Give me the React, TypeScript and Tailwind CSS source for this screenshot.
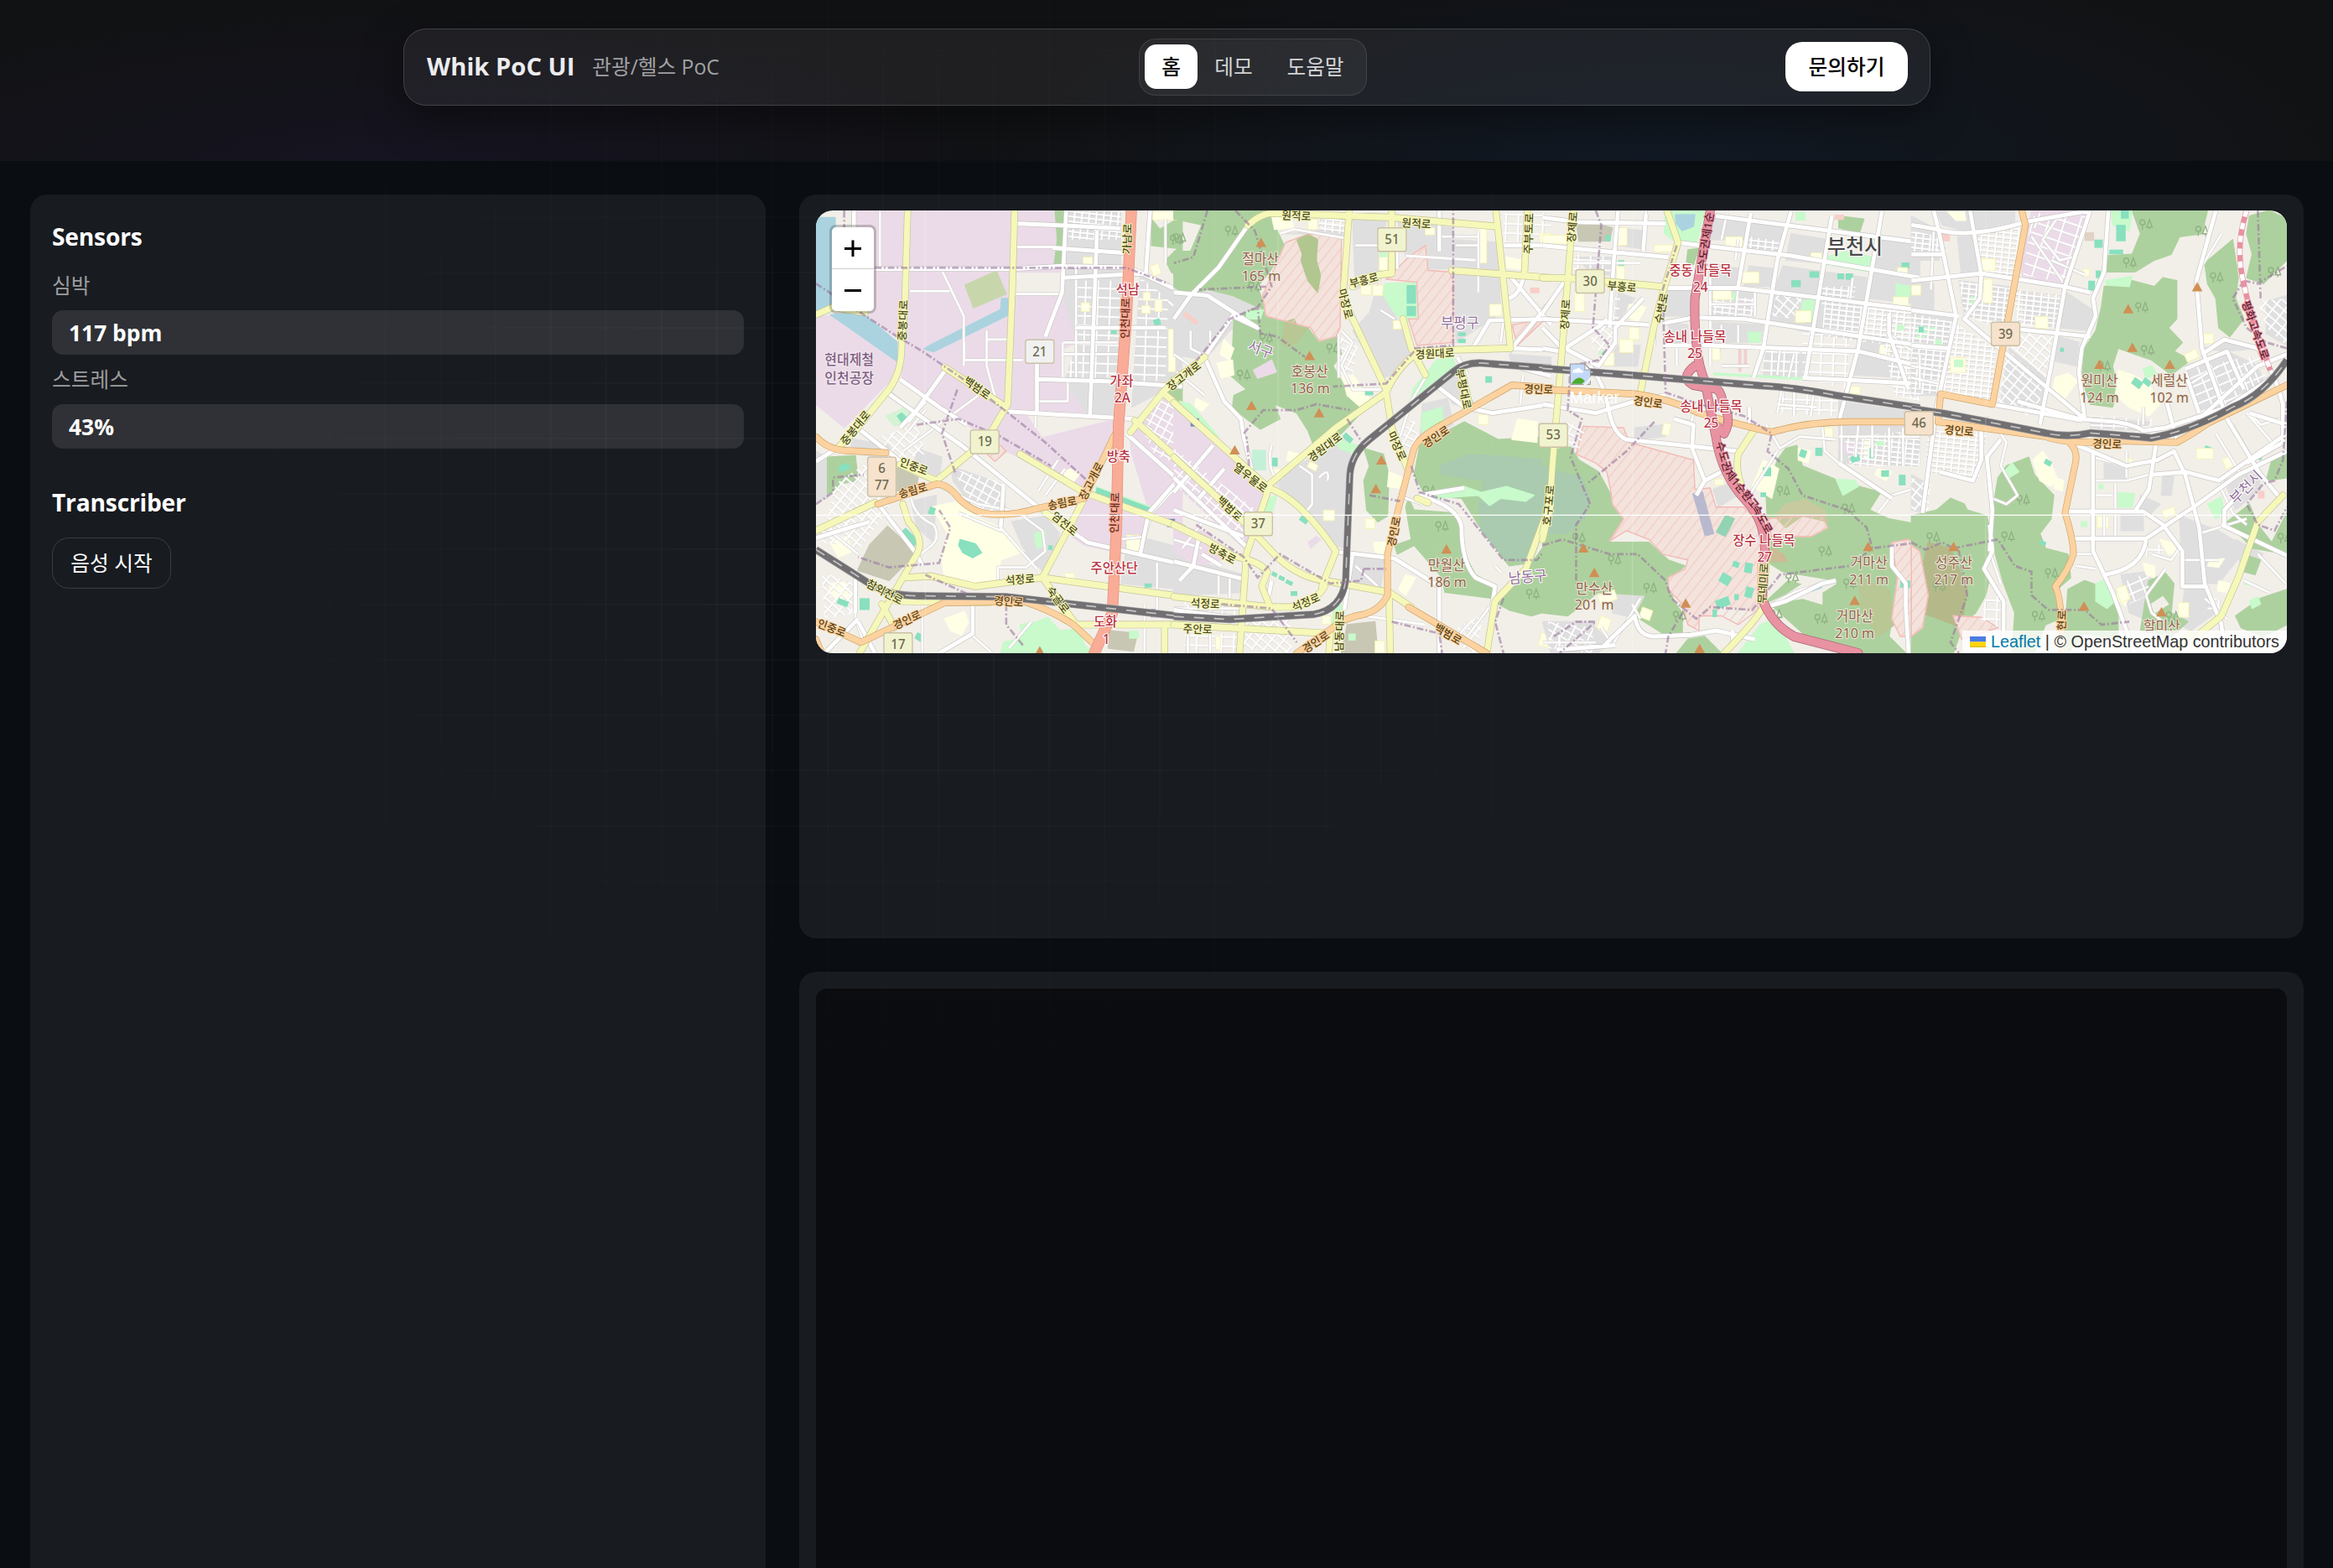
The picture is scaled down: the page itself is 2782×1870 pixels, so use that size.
import React from "react";

type RoadKind = "m" | "w" | "y" | "o" | "t" | "h";
type Label = [x: number, y: number, text: string, kind: string, rotate?: number];
type Sheet = {
  x: number;
  land: [fill: string, points: string][];
  streets: [pattern: string, points: string][];
  roads: [RoadKind, string][];
  rail: string;
  borders: string;
  blocks: [fill: string, x: number, y: number, w: number, h: number, rotate?: number][];
  peaks: [number, number][];
  trees: [number, number][];
  shields: [number, number, string, string][];
  labels: Label[];
};

const ROAD: Record<RoadKind, [fill: string, casing: string, width: number]> = {
  m: ["#ffffff", "#d4d1ce", 8],
  w: ["#ffffff", "#c9c6c4", 14],
  y: ["#f6f8b9", "#c3c494", 21],
  o: ["#fcd3a0", "#cfa468", 20],
  t: ["#f9ac98", "#e58f78", 36],
  h: ["#e892a2", "#a5606f", 29],
};

const F = "#add19e";
const P = "#ebdbe8";
const G = "#e0dfdf";
const W = "#aad3df";
const S = "#ffffe5";
const B = "#f3e3dc";
const L = "#c8facc";
const K = "#88e0be";
const C = "#aacbaf";
const N = "#c7c7b4";

const LABEL: Record<string, [fill: string, size: number, halo: string]> = {
  y: ["#4e4b25", 38, "#f6f8b9"],
  o: ["#5b4316", 38, "#fcd3a0"],
  t: ["#6b2c20", 38, "#f9ac98"],
  h: ["#5d1f30", 38, "#e892a2"],
  s: ["#b8323f", 46, "#ffffff"],
  p: ["#8f6248", 48, "#eeeadd"],
  d: ["#94709b", 50, "#ffffff"],
  i: ["#7d6080", 48, "#f3e8f1"],
  c: ["#4a4a4a", 72, "#ffffff"],
};

const sheets: Sheet[] = [
  {
    x: 0,
    land: [
      [P, "175,31 920,31 925,300 960,370 975,480 925,500 920,610 1020,620 1030,720 1110,740 1060,890 1000,1000 960,960 720,850 640,800 480,690 345,600 350,480 250,410 160,380"],
      [P, "39,390 100,390 330,545 325,590 140,770 39,690"],
      [P, "1010,990 1240,1055 1200,1210 1000,1170 955,1140"],
      [P, "1160,790 1280,650 1350,700 1350,1110 1230,1050 1170,860"],
      ["#f2efe9", "755,245 920,245 910,320 750,315"],
      ["#f2efe9", "800,730 1020,730 1000,700 1100,740 850,800"],
      [W, "39,55 108,55 108,370 39,375"],
      [W, "90,385 205,380 330,478 330,545"],
      [W, "425,502 460,512 725,388 725,330 703,330 700,368 450,488"],
      [G, "930,31 1130,31 1130,740 1020,740 930,610 975,480 930,350"],
      [G, "1200,250 1350,320 1350,590 1270,650 1170,700"],
      [G, "170,808 300,830 330,890 160,850"],
      [G, "400,840 490,870 480,940 390,900"],
      [G, "740,1090 860,1070 910,1130 870,1275 790,1200"],
      [G, "380,1020 470,1000 460,1160 400,1110"],
      [G, "520,900 700,960 720,1050 600,1040 530,950"],
      [G, "39,850 80,870 80,1010 39,1020"],
      [G, "1160,1130 1350,1180 1350,1320 1130,1300"],
      [F, "1240,60 1270,95 1350,50 1350,270 1310,240 1290,200 1335,160 1240,150"],
      [F, "80,870 180,865 190,950 130,960 80,1000"],
      [F, "895,31 925,31 915,215 892,215 903,130"],
      [F, "1310,600 1350,600 1350,690 1290,640"],
      [L, "820,1130 860,1120 860,1170 830,1180"],
      [L, "700,1537 710,1500 775,1485 770,1440 830,1430 870,1415 910,1460 985,1455 1000,1510 1040,1537"],
      [L, "1040,970 1240,1040 1240,1062 1040,1000"],
      ["#c8d7ab", "572,285 685,237 720,315 603,362"],
      [N, "295,1105 400,1195 300,1290 188,1255 230,1170"],
      [N, "330,905 405,940 400,965 330,985"],
      [N, "1090,1460 1190,1470 1175,1530 1085,1520"],
      [S, "455,1040 550,1020 610,1075 700,1110 740,1150 785,1190 700,1220 690,1285 590,1310 500,1290 490,1220 510,1130"],
      [S, "90,1300 140,1295 165,1340 120,1360 88,1340"],
      [S, "500,1420 570,1395 585,1430 560,1475 520,1460"],
      [S, "90,1160 150,1140 170,1190 120,1210"],
      [S, "925,920 950,910 980,930 960,955 930,945"],
      ["#d4f3d4", "290,730 360,700 390,740 320,765"],
      [B, "640,850 700,830 720,850 680,885"],
      [K, "345,1125 360,1113 400,1150 390,1176 375,1172"],
      [K, "555,1150 610,1165 632,1195 600,1212 565,1195 550,1170"],
      [K, "1045,975 1238,1045 1230,1060 1040,1000"],
      [K, "330,730 345,720 370,740 350,758"],
    ],
    streets: [
      ["url(#grid-a)", "935,35 1130,35 1130,130 945,130"],
      ["url(#grid-b)", "975,270 1130,270 1120,600 930,600 975,480"],
      ["url(#grid-b)", "1200,260 1300,330 1290,600 1170,640"],
      ["url(#grid-c)", "110,960 220,890 300,1040 200,1180 60,1160"],
      ["url(#grid-d)", "530,910 720,960 710,1060 600,1040"],
      ["url(#grid-d)", "1190,740 1290,660 1350,710 1350,900 1250,860"],
      ["url(#grid-c)", "60,1260 170,1300 180,1400 70,1420"],
      ["url(#grid-c)", "270,800 400,760 430,860 300,880"],
    ],
    roads: [
      ["m", "M268,31V230M172,31V80M375,305H518M490,235L568,390V560M370,300V230M650,440V560L690,700M570,480V540H780M650,470H725M830,680H940V615M825,560V770M925,480H1120M920,520H1120M922,480V600M750,315H910M750,155H890"],
      ["m", "M290,640L370,700M505,570L350,760M620,660L350,850M430,710L370,780M835,985L905,880M860,1000L930,910M380,1010Q390,1070 460,1100Q490,1150 440,1180L400,1210M690,1290V1245H790L860,1190L850,1120L780,1070M40,1120L100,1130L190,1200M180,1320V1420L210,1500M420,1380V1537M730,1520L810,1430M1200,1200L1240,1060L1350,950M1215,1370V1537M1260,1230V1400"],
      ["m", "M550,1060L700,1120V1060M700,1110L830,1250M590,1470L670,1537M460,960L620,1030L730,1050M970,220V600M1120,1150L1220,1140M1290,60V210M1300,340L1350,380"],
      ["w", "M175,31V100M250,230H740M740,230L920,220L1160,225L1350,310M750,75L925,82L1130,92M885,158L1140,175M935,31L920,310L860,460M830,550V720M1045,100L1020,725M725,715L1175,740L1240,780M920,260L1220,245L1235,31M835,605L1080,612L1350,630M970,430H1290"],
      ["w", "M340,605L480,700L580,760M200,780L390,920M300,655L560,830L730,960L860,1060L1010,1160L1350,1235M430,680L340,770M505,570L370,750M39,1145L230,1090M39,885L130,830M270,1040L400,1200L420,1240M710,970L700,1110M600,1370V1470L480,1537M190,1420L70,1537M190,1430L250,1537M1150,790L1350,960M1200,1200L1230,1060L1350,930M180,1250V1400"],
      ["y", "M367,31L358,330L345,500Q345,580 300,640L180,780L120,835M750,31L742,300L725,690L650,810L470,950M500,565L720,700M39,1120L250,1025M39,385L100,360L215,378M340,895L470,950M770,860L1000,990L1350,1110M1000,1010L850,1280M195,1537L350,1280L450,1275L610,1310L850,1280L1350,1345M350,1030L370,1090Q430,1150 400,1200L350,1280M275,1370L320,1450M330,1360L660,1365M850,1280L970,1440L1350,1440M1287,1440V1537M1165,785L1285,645L1350,590M1180,745L1350,890M1280,650L1350,705M860,1060L960,1120"],
      ["o", "M39,800Q80,845 150,848L290,855M260,1030L470,962Q510,960 550,1010Q610,1070 700,1065Q760,1065 830,1045L1000,1010L1110,790M39,1430L200,1500L500,1365L780,1360Q880,1390 960,1440L1040,1510M39,1490L60,1537"],
      ["t", "M1168,31L1150,400L1122,760L1115,1100L1100,1400L1035,1537"],
    ],
    rail: "M39,1185L230,1300Q290,1340 400,1342L720,1345L1350,1412",
    borders: "M140,31V90M39,280L330,460L420,510L620,640L860,820L1010,950M250,226H1150L1300,280M39,1030L100,990L100,940L210,930M400,760L550,740L700,800L880,900M480,1050L520,1110L480,1230L300,1245L190,1210M430,1270L580,1335M720,1370V1440L780,1510M545,640L490,790L540,930",
    blocks: [
      ["#7a85b5", 1143, 186, 30, 30], ["#7a85b5", 1128, 512, 30, 30], ["#7a85b5", 1296, 1080, 28, 28], ["#7a85b5", 1237, 1387, 28, 28],
      [S, 995, 190, 34, 24], [S, 988, 345, 30, 30], [S, 1210, 310, 26, 28], [S, 1252, 335, 26, 40], [S, 1205, 355, 30, 26], [S, 1300, 435, 26, 145],
      [K, 1248, 400, 24, 22, -20], [K, 1095, 435, 20, 16], [K, 120, 895, 40, 22, -20], [K, 443, 1040, 22, 26, 20], [K, 1148, 1165, 24, 22], [K, 115, 1355, 40, 20, 20], [K, 195, 1350, 36, 40], [K, 395, 1470, 26, 24, 30], [K, 1215, 1300, 26, 14], [K, 870, 1170, 16, 16],
      [S, 1150, 1135, 50, 55], [S, 930, 1265, 34, 24], [L, 1160, 1460, 34, 28], [S, 1240, 215, 30, 36, -20], [S, 1245, 31, 100, 32],
    ],
    peaks: [[840, 1530]],
    trees: [[1330, 130]],
    shields: [[840, 511, "21", "#f1f1f1"], [643, 818, "19", "#f1f3cf"], [333, 1508, "17", "#f1f3cf"], [275, 937, "6|77", "#f6e2cd"]],
    labels: [
      [158, 556, "현대제철", "i"], [158, 620, "인천공장", "i"],
      [357, 405, "중봉대로", "y", -87], [185, 775, "중봉대로", "y", -50], [612, 640, "백범로", "y", 35],
      [387, 908, "인중로", "y", 20], [388, 990, "송림로", "o", -15], [922, 1033, "송림로", "o", -10], [1030, 955, "장고개로", "o", -62],
      [1160, 128, "가남로", "y", -88], [1153, 398, "인천대로", "t", -88], [1115, 1060, "인천대로", "t", -88],
      [925, 1102, "염전로", "y", 38], [770, 1293, "석정로", "y", -4], [282, 1335, "참외전로", "y", 27], [900, 1360, "숙골로", "y", 52],
      [728, 1368, "경인로", "o", 4], [368, 1430, "경인로", "o", -24], [93, 1458, "인중로", "o", 20],
      [1155, 315, "석남", "s"], [1133, 628, "가좌", "s"], [1136, 685, "2A", "s"], [1122, 885, "방축", "s"], [1107, 1263, "주안산단", "s"], [1075, 1447, "도화", "s"], [1078, 1505, "1", "s"],
    ],
  },
  {
    x: 1320,
    land: [
      [G, "0,290 210,320 310,370 200,440 110,540 0,520"], [G, "640,60 760,60 740,270 650,300"], [G, "800,60 1000,90 1000,230 910,230 900,150 830,190"],
      [G, "1000,130 1160,140 1170,380 1010,480"], [G, "730,280 800,400 860,490 790,590 740,600 640,440 700,380"], [G, "350,950 620,800 640,900 620,1180 560,1170 450,1030"],
      [G, "640,1190 760,1210 740,1310 630,1290"], [G, "0,1200 250,1270 250,1330 0,1340"], [G, "890,690 980,670 1000,760 880,820"], [G, "1200,520 1350,530 1350,560 1210,560"],
      [G, "400,110 600,90 610,120 480,110"], [G, "1000,550 1080,700 1000,690 950,620"],
      [P, "0,690 120,800 340,975 310,1060 250,1180 0,960"], [P, "0,1100 130,1130 170,1220 80,1240 0,1190"], [P, "480,1160 510,1140 525,1150 490,1180"],
      [F, "100,31 350,31 370,100 395,150 350,230 300,290 330,372 210,320 120,300 50,320 0,290 0,170 60,170 100,80 0,60 0,31"],
      [F, "215,400 280,365 420,400 480,430 520,480 585,460 600,520 570,560 600,610 620,650 675,690 660,730 600,790 500,830 480,780 440,720 360,690 380,740 310,775 260,740 210,700 215,660 260,640 200,590 210,500"],
      [F, "880,830 960,790 1040,750 1100,780 1160,810 1350,800 1350,1000 1280,1230 1200,1240 1090,1100 1030,1010 900,1000 860,930"],
      [F, "1170,1330 1280,1230 1350,1140 1350,1390 1280,1410 1200,1390 1160,1370"],
      [F, "680,840 750,860 770,930 765,1070 730,1090 690,1050 680,950 700,900"],
      [F, "840,1010 860,1050 1000,1060 1025,1100 1040,1200 1080,1270 1150,1310 1140,1350 970,1330 960,1280 860,1170 800,1200 790,1170 850,1150 830,1040"],
      [C, "950,900 1060,860 1350,880 1350,970 1330,1100 1280,1230 1190,1220 1100,1120 1090,1040 1110,950 960,930"],
      [L, "930,1000 1040,970 1100,990 1190,970 1290,1000 1260,1020 1170,1010 1130,1035 1090,1000 940,1010"],
      [L, "855,640 940,540 1000,530 1010,570 850,670"], [L, "890,720 960,700 965,760 900,810 885,770"], [L, "755,280 880,275 875,410 830,410 790,380 750,320"],
      [L, "580,1350 600,1370 600,1450 560,1460"], [L, "340,1010 370,1000 350,1060 325,1060"], [L, "260,375 320,370 310,400 260,400"], [L, "580,810 660,830 640,855 590,840"], [L, "20,680 60,690 160,800 110,780"],
      [B, "400,140 470,115 520,108 600,125 595,430 580,460 520,475 490,430 410,410 330,390 318,320"],
      [B, "760,265 840,190 900,150 910,235 985,240 1000,270 1000,480 870,490 840,400 875,400 870,275"],
      [B, "1210,420 1330,400 1230,490"], ["#b2c690", "440,130 480,112 515,130 510,200 525,250 515,310 480,270 455,200 460,180"], ["#b9c795", "400,410 430,400 445,430 480,430 440,480 410,495 385,480"],
      [P, "285,575 350,540 367,580 300,602"], [N, "620,1440 720,1430 730,1537 600,1537"],
      [S, "350,50 420,60 430,90 360,95"], [S, "180,470 215,500 200,540 165,520"], [S, "600,580 650,600 680,650 720,690 680,710 620,660"],
      [S, "155,550 210,540 215,590 170,600"], [S, "770,920 820,940 810,975 765,970"], [S, "1230,740 1300,750 1300,820 1210,810"], [S, "80,670 125,690 100,715 75,695"],
      [S, "830,1270 865,1280 830,1340 805,1320"], [S, "715,1160 765,1160 750,1210 720,1190"], [S, "1190,190 1245,200 1240,230 1190,225"], [S, "410,850 450,860 440,890 405,880"],
    ],
    streets: [
      ["url(#grid-c)", "0,840 310,1060 240,1170 0,960"], ["url(#grid-a)", "520,40 620,50 610,110 520,100"], ["url(#grid-b)", "40,1360 240,1370 240,1410 40,1400"],
      ["url(#grid-b)", "40,1470 240,1470 230,1537 40,1537"], ["url(#grid-d)", "590,460 660,470 640,600 590,590"], ["url(#grid-c)", "1000,1460 1110,1400 1080,1537 990,1500"],
      ["url(#grid-d)", "800,770 860,740 880,820 830,850"], ["url(#grid-b)", "1180,40 1350,40 1350,150 1180,140"], ["url(#grid-c)", "250,1420 420,1400 420,1537 250,1520"],
    ],
    roads: [
      ["m", "M60,440V500L120,530M10,580L110,660M0,520L60,560M130,440V520M380,110L430,95L610,125M530,40L620,60M600,440L640,480L600,560L640,640L740,640M650,150H800V230M830,185L1080,200M1010,150H1090M1090,100V310M950,120H1090M590,600V450M740,370L790,400M810,800L850,680L900,600M450,900L495,930V1030L470,1060M350,830Q330,900 370,950M520,940Q560,900 550,950M800,1000L890,1030M1250,590L1240,690M1150,1240L1170,1260M680,1410L900,1440"],
      ["m", "M30,1180L120,1070M0,1150L100,1180M160,1270V1340M200,1270V1350M730,1310L650,1240M1060,1430L1000,1500M1130,1380L1050,1480M1180,400L1170,480M50,1370V1537M0,1385H240M130,1400V1537"],
      ["w", "M0,310L120,320L300,430L210,390L110,530L180,680L240,740L250,800L290,960M0,400L60,320L160,225L265,82M930,620L1040,700L1140,720L1350,690M1015,530L1050,590M950,170V31M1180,150H1350M1200,250L1350,420M1070,500L1130,405L1350,400M1200,510L1350,340M1210,500L1350,505M1200,330Q1260,310 1255,180M0,940L260,1175M0,990L140,830M90,1010L180,910M0,1050L250,1140M20,1290L70,1240L90,1140M0,1225L250,1285M590,1193L790,1215L950,1310V1537M890,1005Q1020,1040 1030,1110Q1030,1230 1080,1280L1150,1310L1135,1400M640,1200L610,1390M170,1240L100,1200M880,1000L1040,975M350,1290L340,1340M0,1390L240,1420M1200,555L1350,595"],
      ["y", "M265,82Q310,40 360,40L780,55L1150,85M628,31L610,270Q600,320 640,400L760,640M640,290Q660,255 780,245V31M1153,31L1205,500L1010,505L880,510Q800,560 760,650L580,770L345,960L310,1060L260,1200L235,1537M820,400L850,500L900,590M1265,31L1255,250M995,235L1350,260M760,650L780,770L840,920M0,685L340,975Q450,1010 580,1190L530,1310M0,870L250,1090L370,1210Q450,1280 540,1290L770,1330L850,1380M0,1100L120,1155L210,1205Q310,1225 335,1260L315,1310L345,1380H420Q500,1370 540,1310M0,1345L345,1380M0,1440L560,1470L555,1537M770,1330L775,1537M1030,570L1060,700M1350,870L1330,1070L1260,1250L1150,1360L1120,1537M110,530L0,610M870,1010L910,1025"],
      ["o", "M1350,635L1210,625L960,760Q880,800 860,840L800,1060L765,1200V1340Q740,1390 680,1405Q610,1415 570,1450L440,1537M840,1380L1120,1537"],
    ],
    rail: "M0,1412L200,1422L500,1405Q600,1390 615,1290L630,930Q635,860 700,810L1000,580Q1040,548 1100,550L1350,568",
    borders: "M120,31L70,190L0,210M220,31L290,100L350,290L300,360L310,450L370,460L470,530M330,290L90,300M300,360L200,400L0,640M250,790L320,710L440,710L510,690L630,710M860,500L1000,490V31M860,510L760,620L570,630M620,740L680,830M850,900L880,990L1020,1030L1180,1220H1300L1350,1160M680,1250L670,1290L560,1300L380,1200L300,1280L250,1210L80,1100M680,1250H760M700,1000L810,1020M170,1370L350,1385L440,1500M780,1430L950,1470L960,1537M1180,1350L1150,1430L1180,1537M270,900L260,800M700,1250",
    blocks: [
      ["#7a85b5", 60, 738, 30, 28], [K, 833, 285, 34, 28], [K, 833, 312, 34, 36], [K, 833, 356, 34, 34], [K, 1017, 446, 28, 12], [K, 1017, 468, 28, 14], [K, 1115, 595, 24, 22], [K, 605, 795, 36, 20, 40], [K, 684, 646, 30, 14], [K, 450, 1075, 30, 18, 35], [K, 540, 1065, 26, 16], [K, 418, 1326, 24, 16], [K, 350, 1262, 20, 14, 25], [K, 375, 1275, 22, 14, 25], [K, 400, 1290, 26, 14, 25], [K, 352, 872, 20, 30],
      [S, 670, 285, 36, 32], [S, 712, 285, 36, 36], [S, 735, 175, 30, 60], [S, 1090, 90, 30, 120], [S, 1130, 350, 44, 40], [S, 900, 90, 34, 24], [S, 785, 405, 30, 30], [S, 535, 1050, 40, 36], [S, 685, 1080, 34, 34], [S, 350, 910, 40, 34], [S, 480, 60, 34, 36], [S, 480, 890, 34, 22, 25], [S, 1090, 725, 36, 34], [S, 720, 1495, 34, 42], [S, 1310, 110, 40, 34], [S, 150, 1480, 16, 44], [S, 530, 1410, 32, 28], [S, 1310, 1470, 34, 44, 15], [L, 625, 1470, 26, 24], [L, 736, 172, 28, 18], ["#c5f0d8", 280, 845, 50, 70], ["#f7cfc8", 1275, 293, 34, 20], ["#f7cfc8", 30, 390, 60, 16, 35],
    ],
    peaks: [[312, 140], [486, 525], [278, 695], [520, 720], [218, 846], [743, 880], [723, 978], [976, 1183]],
    trees: [[207, 100], [290, 290], [330, 465], [250, 590], [570, 500], [915, 985], [960, 1105], [1285, 1335], [20, 125]],
    shields: [[781, 130, "51", "#f1f3cf"], [302, 1097, "37", "#f1f3cf"]],
    labels: [
      [438, 56, "원적로", "y", 2], [868, 82, "원적로", "y", 3], [682, 275, "부흥로", "y", -14], [608, 350, "마장로", "y", 75], [1277, 110, "주부토로", "y", -88],
      [935, 525, "경원대로", "y", -3], [545, 842, "경원대로", "y", -36], [40, 600, "장고개로", "y", -36], [270, 945, "열우물로", "y", 37], [195, 1050, "백범로", "y", 42],
      [170, 1205, "방축로", "y", 28], [112, 1375, "석정로", "y", 3], [475, 1370, "석정로", "y", -22], [85, 1462, "주안로", "y", 2], [600, 1462, "남동대로", "y", -88],
      [793, 835, "마장로", "y", 65], [1030, 640, "부평대로", "y", 78],
      [942, 807, "경인로", "o", -33], [1305, 646, "경인로", "o", 2], [795, 1125, "경인로", "o", -78], [512, 1505, "경인로", "o", -32], [978, 1478, "백범로", "o", 30],
      [310, 215, "절마산", "p"], [313, 272, "165 m", "p"], [486, 597, "호봉산", "p"], [488, 654, "136 m", "p"], [976, 1255, "만월산", "p"], [978, 1312, "186 m", "p"],
      [1024, 430, "부평구", "d"], [305, 520, "서구", "d", 20], [1268, 1295, "남동구", "d", -5],
    ],
  },
  {
    x: 2640,
    land: [
      [G, "600,40 730,60 720,130 600,130"], [G, "740,70 870,90 850,180 730,160"], [G, "890,110 1020,130 1000,210 870,200"], [G, "1190,120 1350,140 1350,350 1170,330"],
      [G, "600,210 710,230 690,290 600,290"], [G, "740,220 840,230 830,290 720,290"], [G, "860,220 1160,260 1130,470 920,440 800,400 830,300"], [G, "605,300 760,310 760,390 600,390"],
      [G, "610,410 790,420 780,480 610,480"], [G, "440,300 530,300 530,390 430,390"], [G, "270,310 330,330 260,420"], [G, "270,490 350,490 340,560 220,560"],
      [G, "450,410 520,420 520,480 450,480"], [G, "800,500 940,520 930,600 790,590"], [G, "610,980 690,950 700,1000 630,1040"], [G, "0,1430 170,1430 230,1490 200,1537 30,1537"],
      [G, "330,770 430,760 440,800 330,810"], [G, "1120,500 1180,460 1240,490 1300,600 1110,590"], [G, "120,190 250,190 240,250 180,250"], [G, "270,90 360,100 350,160 270,150"], [G, "1060,680 1350,720 1350,900 1060,890"], [G, "260,1320 400,1320 390,1430 250,1400"],
      [F, "0,850 100,835 130,880 200,920 240,990 300,1080 240,1160 380,1160 450,1220 510,1240 450,1290 470,1360 500,1400 500,1470 430,1470 330,1410 370,1340 200,1330 90,1410 0,1400"],
      [F, "870,840 910,830 930,900 1060,950 1210,990 1170,1050 1240,1080 1350,1100 1350,1150 1240,1170 1300,1260 1260,1370 1240,1480 1300,1537 1100,1537 980,1510 850,1400 800,1360 880,1290 950,1310 1050,1290 860,1260 810,1230 800,1000 840,880"],
      [F, "480,1537 520,1490 580,1480 640,1537"], [C, "0,900 60,920 140,940 170,1010 150,1080 90,1130 0,1130"],
      [B, "145,765 290,770 310,820 540,880 545,980 600,975 620,1040 720,1040 780,1100 800,1130 770,1230 770,1390 700,1440 640,1410 560,1410 560,1460 520,1440 500,1370 450,1320 450,1280 510,1250 520,1220 430,1200 380,1150 300,1120 240,1155 290,1080 250,1030 245,990 230,920 190,890 120,860"],
      [B, "800,1080 930,1070 1000,1070 1020,1110 960,1140 820,1140"], ["#c7ca9f", "830,1070 870,1030 940,1015 1010,1050 1020,1090 930,1070 870,1110"], ["#b9c795", "1130,1280 1240,1320 1260,1440 1200,1480 1140,1380"],
      [B, "1250,1160 1310,1150 1350,1180 1350,1480 1280,1480 1250,1420 1270,1280"], ["#cdbb95", "820,1180 860,1200 875,1225 820,1225"],
      [L, "440,31 580,31 550,150 480,140 435,110"], [L, "1050,945 1120,950 1130,970 1075,1000"], [L, "1010,190 1090,170 1180,190 1170,240 1020,215"], [L, "930,340 975,330 970,410 925,400"], [L, "735,445 780,445 780,480 738,478"], [L, "1265,280 1320,290 1310,330 1265,330"], [L, "780,1440 830,1420 900,1537 700,1537"],
      [F, "1060,50 1150,60 1130,120 1100,100 1060,90"], [F, "520,165 560,160 540,215 515,205"], [W, "475,45 545,45 540,85 500,100 478,75"],
      [N, "120,70 190,75 250,90 240,135 130,135"], ["#b8b8cf", "538,995 572,988 612,1130 582,1138"], ["#92d3b4", "655,1068 686,1080 655,1140 622,1125"],
      [S, "310,350 370,360 340,410 300,390"], [S, "790,880 845,910 820,1010 750,970"], [S, "1150,810 1185,820 1185,880 1150,870"], [S, "915,840 960,850 950,890 915,880"], [S, "1200,910 1250,920 1230,950 1190,930"], [S, "1210,490 1245,490 1240,530 1205,525"],
      [P, "1070,825 1130,820 1125,855 1065,860"], ["#f2efe9", "810,450 900,460 890,500 810,490"], ["#f2efe9", "640,1380 760,1400 700,1460 540,1460"], ["#f2efe9", "800,1370 870,1340 950,1290 1050,1300 1000,1330 1000,1370 930,1350"],
    ],
    streets: [
      ["url(#grid-a)", "740,120 850,135 850,185 730,180"], ["url(#grid-b)", "930,440 1100,460 1090,640 930,600"], ["url(#grid-a)", "1000,290 1120,290 1110,350 1000,350"],
      ["url(#grid-a)", "610,320 760,330 750,390 610,385"], ["url(#grid-c)", "840,310 930,330 900,400 820,390"], ["url(#grid-a)", "1010,340 1350,380 1350,500 1000,460"],
      ["url(#grid-a)", "1190,360 1350,370 1350,680 1260,660"], ["url(#grid-b)", "800,490 920,510 910,600 780,590"], ["url(#grid-c)", "170,430 270,420 240,520 180,500"],
      ["url(#grid-b)", "110,180 250,190 250,260 110,250"], ["url(#grid-b)", "840,640 1060,660 1050,730 840,720"], ["url(#grid-a)", "1080,800 1350,780 1350,900 1100,900"],
      ["url(#grid-d)", "90,750 150,780 130,840 90,820"], ["url(#grid-b)", "240,270 280,300 270,420 240,420"], ["url(#grid-d)", "20,1430 180,1450 180,1537 20,1520"],
    ],
    roads: [
      ["m", "M370,31L360,190M110,210H350M600,230V560M660,40L640,130M700,290L690,390M760,300V390M600,350H760M700,130L690,200M480,490V560M400,490V440M640,420V480M700,420V480M640,560H740M850,500L840,590M900,520L880,600M1110,260L1100,340M1250,380L1240,450L1350,530M800,760L850,840L920,800L1050,810M1000,760L1010,850L1060,890M1130,760L1120,870M1180,760V870M1240,770V900M1290,770V900M1060,800H1350M1070,760V890L1140,940M860,620L840,720M970,650L960,730M900,630V730M840,690L980,700"],
      ["m", "M740,1000L840,850M470,740L530,750M540,720L530,760M1200,1060L1250,1000L1320,980M250,1510L350,1350M210,1450L250,1510M320,1370L350,1420M60,1480V1537M0,1500L190,1500M820,1370L900,1330L1000,1300"],
      ["w", "M270,31L255,200L240,430M370,45L360,170M0,55L120,70M0,150L110,160L450,190M110,70L440,75M480,140L890,185L1350,260M620,50L1350,140M745,40L700,290M890,31L840,200L790,500L755,600M740,700V770M1035,50L940,600M1215,31L1130,500L1060,750M440,295H700L1010,330L1350,370M430,415L540,395L720,400L1350,490M430,490H600L1130,510L1350,560M0,400L380,420M80,500L210,420L230,400M80,500L200,560L260,480V430L360,330M0,380L80,270M0,430L70,500M0,500L60,510"],
      ["w", "M0,690L190,720L330,680L440,660M170,560Q220,620 235,700Q250,790 300,810L700,850M470,740L540,760L535,840L580,950L550,1000M580,950L640,920M1250,1010L1060,890M930,600L1350,620M1240,380V450L1310,640M210,1520L330,1410Q340,1480 400,1480L530,1475L620,1460L760,1490M260,1510L50,1525M680,1460V1510M800,1380L870,1360L1000,1300L1050,1290M1250,1170V1240L1300,1300V1380L1310,1537"],
      ["y", "M110,31L65,560L35,900Q30,1020 0,1130M0,260L110,262L430,290M445,31L485,140L430,310L400,420L350,650M755,780L700,860Q690,910 710,960M800,1230L790,1380Q760,1430 650,1537M0,1150L30,1030"],
      ["o", "M0,640L330,655Q450,670 560,720Q700,760 820,785Q950,750 1100,750H1350"],
      ["h", "M545,560Q490,600 540,625L600,635Q640,630 645,690Q680,740 650,790L630,770M600,31L545,330Q540,520 580,610L620,800Q640,930 730,1020Q800,1090 795,1200L785,1350Q820,1440 900,1480L1130,1537"],
    ],
    rail: "M0,568L330,592L780,627Q900,632 1050,660L1350,703",
    borders: "M190,31L210,80L180,430L240,490L200,540L100,560L90,710L140,740L100,870L170,1030L120,1100V1300M480,150L430,300L440,650L560,690L720,730L820,790L805,850L880,910L930,1000L1090,1050L1160,1110L1180,1180L1350,1160M0,1170L70,1150L240,1200L340,1200L440,1290L460,1350L550,1420L600,1380L750,1390L850,1270L1100,1240L1180,1180M400,750L300,850L160,960M40,1480L120,1430L190,1430L60,1537M500,1400L450,1480L440,1537",
    blocks: [
      [K, 125, 328, 20, 28], [K, 270, 200, 22, 22], [K, 668, 135, 18, 26], [K, 696, 140, 18, 26], [K, 955, 238, 34, 22], [K, 890, 268, 34, 24], [K, 1055, 245, 24, 20], [K, 1085, 245, 26, 22], [K, 905, 388, 24, 22], [K, 940, 392, 22, 22], [K, 1285, 208, 28, 20], [K, 608, 496, 28, 20], [K, 754, 262, 18, 16], [K, 225, 115, 20, 20], [K, 976, 838, 26, 28], [K, 920, 845, 24, 26, 20], [K, 788, 905, 30, 30], [K, 1103, 864, 32, 22, -20], [K, 1212, 915, 28, 22], [K, 1275, 930, 24, 36], [K, 1170, 838, 16, 36], [K, 780, 990, 20, 16], [K, 680, 1225, 24, 20, 20], [K, 723, 1230, 28, 34, 10], [K, 635, 1268, 38, 34, 30], [K, 725, 1312, 28, 36, 15], [K, 620, 1350, 50, 30, -20], [K, 686, 1336, 16, 20], [K, 608, 1388, 16, 26], [K, 1280, 1290, 36, 24], [K, 1330, 972, 20, 16],
      [S, 610, 300, 66, 34], [S, 715, 240, 60, 38], [S, 655, 120, 60, 40], [S, 960, 175, 40, 30], [S, 270, 90, 32, 60], [S, 400, 148, 66, 24], [S, 0, 115, 90, 30], [S, 115, 305, 34, 70], [S, 265, 220, 28, 70], [S, 1270, 225, 36, 30], [S, 1255, 325, 54, 30], [S, 905, 372, 56, 40], [S, 275, 470, 50, 44], [S, 310, 430, 36, 40], [S, 220, 515, 36, 44], [S, 430, 755, 26, 40, 12], [S, 1008, 770, 30, 38], [S, 1100, 630, 36, 24], [S, 350, 1385, 40, 36, 20], [S, 200, 1415, 40, 44, 20], [S, 200, 1330, 64, 34, -20], [S, 605, 490, 30, 50], [S, 615, 945, 34, 20],
      [L, 200, 510, 30, 14, 20], [L, 905, 36, 36, 30], [L, 680, 310, 22, 28], [L, 1268, 420, 26, 18], [L, 1195, 815, 28, 16], [L, 610, 590, 320, 10, 3], ["#f0d0d0", 700, 500, 12, 80], ["#f0d0d0", 720, 500, 12, 60], ["#f7cfc8", 1045, 45, 34, 18], ["#aad3df", 960, 1304, 40, 18, -20],
    ],
    peaks: [[146, 1180], [185, 1263], [512, 1367], [562, 1522], [1165, 1175], [1117, 1358]],
    trees: [[130, 1145], [258, 1220], [385, 1315], [862, 985], [1095, 1045], [1012, 1190], [893, 1280], [997, 1420], [1100, 1300], [490, 1410], [835, 1405]],
    shields: [[170, 272, "30", "#f1f3cf"], [38, 796, "53", "#f1f3cf"]],
    labels: [
      [113, 88, "장제로", "y", -85], [88, 385, "장제로", "y", -86], [283, 297, "부흥로", "y", 5], [432, 365, "수변로", "y", -78], [28, 1035, "호구포로", "y", -84], [796, 1300, "무네미로", "y", -86],
      [376, 690, "경인로", "o", 8], [590, 135, "수도권제1순", "h", -81], [642, 870, "수도권", "h", 73], [708, 985, "제1순환고", "h", 50], [780, 1085, "속도로", "h", 60],
      [565, 250, "중동 나들목", "s"], [565, 307, "24", "s"], [545, 476, "송내 나들목", "s"], [545, 533, "25", "s"], [603, 712, "송내 나들목", "s"], [603, 769, "25", "s"], [792, 1170, "장수 나들목", "s"], [795, 1226, "27", "s"],
      [1118, 180, "부천시", "c"], [185, 1334, "만수산", "p"], [185, 1390, "201 m", "p"], [1168, 1247, "거마산", "p"], [1168, 1304, "211 m", "p"], [1117, 1430, "거마산", "p"], [1117, 1487, "210 m", "p"],
    ],
  },
  {
    x: 3960,
    land: [
      [G, "0,50 100,100 100,200 0,200"], [G, "90,31 370,31 370,80 230,110 110,80"], [G, "165,120 220,110 240,240 180,260"], [G, "0,270 80,280 80,370 0,370"], [G, "170,270 350,290 330,410 190,390"], [G, "540,300 650,370 640,440 530,430"], [G, "530,460 600,480 590,560 500,540"],
      [G, "400,310 530,330 520,430 400,410"], [G, "0,380 150,400 100,660 0,660"], [G, "350,500 480,600 460,720 320,680"], [G, "980,560 1130,510 1240,560 1270,630 1030,740"], [G, "1050,500 1150,470 1230,500 1130,510"],
      [G, "690,890 770,910 770,950 690,940"], [G, "900,930 940,930 930,1000 895,1000"], [G, "750,1060 830,1070 830,1120 750,1120"], [G, "960,1070 1100,1120 1200,1180 1100,1300 970,1300"], [G, "750,1270 840,1260 900,1330 860,1430 780,1400"], [G, "1270,340 1344,320 1344,490 1270,450"], [G, "980,1310 1060,1310 1090,1400 1000,1460 960,1440"], [G, "640,740 860,750 820,780 640,770"], [G, "1120,950 1240,900 1250,980 1160,1050"], [G, "0,930 60,960 40,1060 0,1050"], [G, "820,1000 890,1030 860,1060 810,1050"], [G, "1160,1150 1260,1200 1180,1250"],
      [P, "430,31 640,31 560,290 400,260 390,230"],
      [F, "790,31 960,31 1060,31 1040,110 960,120 930,180 870,200 800,240 700,240 700,185 790,180 820,110"],
      [F, "690,290 790,270 870,290 900,260 950,270 950,400 920,430 970,480 940,510 1000,540 930,590 860,540 740,500 720,560 740,640 720,700 640,690 610,600 620,500 660,440 680,360"],
      [F, "1050,210 1150,130 1170,260 1160,330 1190,400 1140,460 1100,430 1090,330 1060,280"], [F, "1210,50 1280,31 1344,60 1344,200 1260,280 1200,260 1220,180 1200,110"],
      [F, "90,1050 140,1010 190,1030 200,1050 270,1070 290,1150 260,1260 290,1300 230,1400 190,1430 150,1537 0,1537 0,1280 60,1290 0,1240 0,1070"], ["#b5b98a", "60,1160 140,1180 200,1320 180,1450 40,1400 40,1240"],
      [F, "340,900 420,870 440,930 510,1000 500,1080 460,1130 480,1180 560,1200 570,1280 510,1330 530,1420 480,1440 440,1537 360,1537 370,1400 330,1300 300,1200 290,1050 310,940"],
      [F, "560,1320 620,1290 680,1310 740,1390 740,1490 620,1470 560,1537 550,1460"], [F, "850,1290 910,1265 940,1300 930,1400 990,1430 930,1480 820,1460 840,1340"], [F, "1160,1410 1250,1350 1344,1320 1344,1440 1260,1480 1180,1450"], [F, "1190,1200 1250,1220 1230,1270 1190,1260"], [F, "1130,1090 1210,1030 1240,1100 1290,1160 1344,1060 1344,1200 1220,1180"], [F, "1290,880 1344,860 1344,940 1270,950"],
      [B, "0,1170 30,1190 60,1340 40,1450 0,1480"], [B, "150,1410 250,1415 310,1450 180,1490"], ["#f2efe9", "280,1300 330,1340 330,1450 250,1420"], ["#f2efe9", "860,1370 900,1345 920,1370 870,1400"],
      [L, "715,31 790,31 780,100 720,80"], [L, "695,270 790,255 780,290 700,285"], [L, "740,990 800,995 790,1040 740,1040"], [L, "330,920 360,890 385,920 350,940"], [L, "660,1300 700,1285 740,1350 700,1385 660,1360"], [L, "1060,1030 1110,1005 1120,1060 1090,1080"], [L, "20,430 90,430 40,465 20,465"], [L, "200,330 245,320 220,370"], [L, "1210,1360 1240,1345 1250,1370 1220,1385"], [L, "830,570 860,560 880,590 840,600"],
      [S, "740,575 790,590 850,620 890,690 850,730 780,700 730,660"], [S, "435,880 470,850 500,890 520,940 500,970 460,950"], [S, "515,600 560,585 595,610 550,670 505,645"], [S, "515,940 545,950 540,985 510,975"], [S, "1070,1220 1120,1215 1100,1245 1060,1240"], [S, "740,1320 780,1340 765,1375 735,1350"], [S, "1100,1290 1140,1300 1130,1330 1095,1325"], [S, "890,1150 930,1160 960,1200 920,1200"], [S, "830,1230 870,1240 870,1280 840,1270"], [S, "130,35 190,35 195,65 160,65"],
    ],
    streets: [
      ["url(#grid-a)", "0,100 100,120 130,170 0,180"], ["url(#grid-a)", "170,270 380,300 350,440 190,390"], ["url(#grid-a)", "230,110 390,80 370,260 250,240"], ["url(#grid-a)", "0,380 150,410 300,500 290,690 100,650 0,660"],
      ["url(#grid-c)", "340,500 470,610 450,740 310,690"], ["url(#grid-a)", "370,300 540,320 510,430 380,420"], ["url(#grid-c)", "360,440 510,460 480,600 340,480"], ["url(#grid-a)", "60,780 270,790 240,940 50,920"],
      ["url(#grid-e)", "430,50 630,50 560,280 400,250"], ["url(#grid-f)", "980,570 1260,520 1270,630 1030,740"], ["url(#grid-c)", "1240,340 1344,330 1344,490 1270,430"], ["url(#grid-b)", "640,730 860,740 860,780 640,770"],
      ["url(#grid-b)", "270,1330 330,1350 310,1450 250,1420"], ["url(#grid-f)", "770,1290 850,1260 850,1340 780,1370"], ["url(#grid-b)", "840,1160 900,1170 900,1210 840,1210"], ["url(#grid-c)", "0,940 70,960 60,1050 0,1050"], ["url(#grid-b)", "1060,1340 1110,1360 1100,1400 1060,1390"],
    ],
    roads: [
      ["m", "M0,720L280,740M80,100L70,300M30,520V640M0,560L120,580M0,600L100,620M300,760L340,820L320,900L380,1000L340,1030L290,1010M650,950H770L850,930M730,960V1140M650,1000H720M690,1145V1060M585,1200H650M590,1240L660,1250M830,760V700M1100,960L1150,1060L1200,1100M1030,1130L1200,1080M970,1220H1100M1050,1350L1130,1420M910,1250L840,1340L860,1400L900,1430M860,1200L930,1220L960,1180M1200,720L1300,830M1090,790L1180,930M1150,760L1250,930M1210,720L1250,760L1320,740M1240,1200L1340,1300M1100,1420L1130,1530M1190,1290L1280,1330M280,1190L320,1300M770,850V940M650,870L770,900"],
      ["m", "M1110,110L1040,220M500,200L620,250M520,60L470,130L530,200L580,190M430,120L540,270M460,40L440,90M1000,620L1100,560M1040,520L1100,640M1130,510L1180,630M1190,550L1230,640"],
      ["w", "M0,80L90,95Q200,130 410,70L640,31M80,31L100,110L160,390L90,700L40,1060M0,270L250,245L550,290L640,310M0,370L170,390M210,31L250,250L245,330L190,400L620,740M0,490L140,500M640,31L550,290L500,560L460,760M705,31L690,240L650,330L660,390L610,500L600,580L620,740M330,430L640,460M0,180L120,180M380,680L600,740L730,750Q800,760 830,780L910,770L1130,700L1290,600M290,690L610,745"],
      ["w", "M1090,31L1020,270L1040,500L1130,740L1250,930L1320,1010M1040,520L1120,470L1240,500L1300,600M980,570L1130,510L1190,640M980,580L1030,720M1030,740L1240,560L1344,520M910,670L950,810M570,820L770,900L880,880L940,850L980,930L1030,1110L1050,1300L1110,1440L1120,1537M860,930L980,920L1100,950L1344,790M560,1055H830L900,1100L970,1190V1310H1050M580,1147H840L1010,1040L1170,930L1344,850M650,850V1190L720,1330L800,1537M875,830L850,980L800,1055M840,1147Q830,1250 690,1270M1110,1100L1344,1205M1120,1110V1050L1160,1010M1300,600L1330,690V820L1200,890M280,1100L290,1190L260,1250L330,1360V1537M320,810L270,870L290,1050L280,1190M100,920L220,950L250,880V780M1210,720L1344,760"],
      ["y", "M1020,1480L1110,1410L1170,1280L1240,1090L1330,1000M1000,1470L940,1537"],
      ["o", "M395,31L408,80L290,690L105,655L95,750L480,800Q570,830 760,815L950,820Q1010,790 1060,755L1344,625M565,820Q600,850 585,900L550,1060Q580,1150 580,1200Q560,1260 515,1310Q540,1350 540,1537"],
    ],
    rail: "M0,705L120,722L480,788Q560,805 640,788Q740,795 860,805Q1000,780 1150,700Q1260,660 1344,540",
    borders: "M1240,31L1250,330M1190,270L1240,280L1344,220M1190,270L1150,330L1200,430L1270,480L1344,500M0,1160L50,1185L110,1160L170,1190L200,1340L140,1500L170,1537M150,1180L310,1150L370,1240L430,1260V1340L490,1390L620,1390L680,1440L780,1430M1344,680L1330,880L1300,950L1260,960L1200,1030L1240,1100L1300,1120L1344,1040",
    blocks: [
      [K, 750, 31, 28, 28], [K, 733, 80, 34, 56], [K, 708, 164, 50, 16], [K, 655, 130, 30, 28], [K, 660, 235, 18, 26], [K, 633, 270, 24, 34], [K, 790, 605, 36, 26, 35], [K, 828, 605, 30, 20, 35], [K, 990, 515, 32, 22, -25], [K, 668, 1068, 36, 26], [K, 1047, 834, 30, 28, 20], [K, 1230, 858, 26, 20, 20], [K, 476, 880, 26, 18, 30], [K, 966, 1382, 24, 32], [K, 26, 426, 18, 20], [K, 532, 498, 14, 14], [K, 458, 1155, 24, 14, 20],
      [S, 250, 195, 50, 40], [S, 258, 265, 32, 80], [S, 443, 392, 46, 40], [S, 0, 285, 34, 34], [S, 140, 532, 54, 50], [S, 615, 230, 22, 24], [S, 1045, 450, 36, 34], [S, 980, 510, 46, 30, -25], [S, 1020, 840, 60, 36], [S, 1118, 870, 34, 36, -25], [S, 665, 1070, 40, 40], [S, 900, 1045, 44, 26, -20], [S, 760, 875, 30, 16], [S, 955, 1365, 38, 50], [S, 740, 1310, 36, 50, -20],
      [L, 152, 538, 34, 26], [L, 670, 960, 18, 20], [L, 606, 1088, 24, 20], [L, 85, 470, 24, 24], [L, 1190, 1290, 20, 16], ["#f7cfc8", 108, 110, 30, 26], ["#f7cfc8", 1240, 985, 24, 26], ["#e0d2c4", 620, 105, 34, 30],
    ],
    peaks: [[776, 366], [791, 497], [673, 555], [925, 555], [1023, 291], [151, 1175], [618, 1377], [895, 1397]],
    trees: [[840, 78], [782, 208], [825, 360], [846, 506], [1093, 258], [1040, 100], [690, 560], [78, 1143], [346, 1140], [400, 1015], [502, 1265], [455, 1410], [100, 1310], [935, 1412], [1335, 1145], [1300, 240]],
    shields: [[337, 451, "39", "#f6e2cd"], [27, 755, "46", "#f6e2cd"]],
    labels: [
      [170, 787, "경인로", "o", 5], [700, 832, "경인로", "o", 2], [545, 1425, "현로", "o", -88], [1225, 440, "평화고속도로", "h", 70],
      [673, 627, "원미산", "p"], [673, 684, "124 m", "p"], [923, 627, "세럴산", "p"], [923, 684, "102 m", "p"], [152, 1246, "성주산", "p"], [152, 1303, "217 m", "p"], [896, 1462, "할미산", "p"],
      [1210, 985, "부천시", "d", -45],
    ],
  },
];

const GRIDS: [id: string, w: number, h: number, angle: number][] = [
  ["grid-a", 26, 17, 6],
  ["grid-b", 44, 32, 2],
  ["grid-c", 34, 24, 40],
  ["grid-d", 30, 26, 28],
  ["grid-e", 54, 36, 18],
  ["grid-f", 46, 30, -22],
];

function MapSheet({ s }: { s: Sheet }) {
  const kinds: RoadKind[] = ["m", "w", "y", "o", "t", "h"];
  return (
    <g transform={`translate(${s.x} 0)`}>
      {s.land.map(([fill, points], i) => (
        <polygon key={i} points={points} fill={fill} stroke={fill} strokeWidth="4" strokeLinejoin="round" />
      ))}
      {s.land.filter(([fill]) => fill === B).map(([, points], i) => (
        <polygon key={i} points={points} fill="url(#hatch)" stroke="#f4b9b5" strokeWidth="4" />
      ))}
      {s.land.filter(([fill]) => fill === "#b2c690" || fill === "#92d3b4" || fill === "#b8b8cf").map(([fill, points], i) => (
        <polygon key={i} points={points} fill={fill} />
      ))}
      {s.streets.map(([fill, points], i) => (
        <polygon key={i} points={points} fill={fill} />
      ))}
      {s.blocks.map(([fill, x, y, w, h, r = 0], i) => (
        <rect key={i} x={x} y={y} width={w} height={h} fill={fill} stroke={fill === S ? "#f5f1a8" : "none"} strokeWidth="2" transform={`rotate(${r} ${x + w / 2} ${y + h / 2})`} />
      ))}
      {s.trees.map(([x, y], i) => (
        <g key={i} fill="none" stroke="#8fb183" strokeWidth="4">
          <circle cx={x - 13} cy={y - 6} r="9" />
          <path d={`M${x - 13},${y + 3}V${y + 18}M${x + 2},${y + 10}L${x + 12},${y - 16}L${x + 22},${y + 10}ZM${x + 12},${y + 10}V${y + 18}`} />
        </g>
      ))}
      {kinds.map((k) => {
        const ds = s.roads.filter((r) => r[0] === k).map((r) => r[1]);
        const [fill, casing, width] = ROAD[k];
        return (
          <g key={k} fill="none" strokeLinejoin="round" strokeLinecap={k === "m" || k === "w" ? "butt" : "round"}>
            {ds.map((d, i) => <path key={`c${i}`} d={d} stroke={casing} strokeWidth={width + 4} />)}
            {ds.map((d, i) => <path key={`f${i}`} d={d} stroke={fill} strokeWidth={width} />)}
          </g>
        );
      })}
      <path d={s.rail} fill="none" stroke="#a5a3a4" strokeWidth="26" />
      <path d={s.rail} fill="none" stroke="#716f71" strokeWidth="22" />
      <path d={s.rail} fill="none" stroke="#c4c4c4" strokeWidth="5" strokeDasharray="36 36" />
      <path d={s.borders} fill="none" stroke="#9a779f" strokeWidth="8" strokeDasharray="24 8 6 8" opacity="0.6" />
      {s.peaks.map(([x, y], i) => (
        <path key={i} d={`M${x - 19},${y + 15}L${x},${y - 17}L${x + 19},${y + 15}Z`} fill="#d08f55" />
      ))}
    </g>
  );
}

function MapText({ s }: { s: Sheet }) {
  return (
    <g transform={`translate(${s.x} 0)`} textAnchor="middle">
      {s.shields.map(([x, y, text, fill]) => {
        const rows = text.split("|");
        const h = rows.length > 1 ? 134 : 80;
        return (
          <g key={text + x}>
            <rect x={x - 51} y={y - h / 2} width="102" height={h} rx="8" fill={fill} stroke="#c9c0a4" strokeWidth="4" />
            {rows.map((r, i) => (
              <text key={r} x={x} y={y + 15 + (i - (rows.length - 1) / 2) * 57} fontSize="45" fontWeight="500" fill="#6d6a50">{r}</text>
            ))}
          </g>
        );
      })}
      {s.labels.map(([x, y, text, kind, r = 0], i) => {
        const [fill, size, halo] = LABEL[kind];
        const road = "yoth".includes(kind);
        return (
          <text
            key={i}
            x={x}
            y={road ? y + 7 : y}
            fontSize={size}
            fontWeight={road || kind === "i" || kind === "s" || kind === "c" ? 500 : 400}
            fill={fill}
            stroke={halo}
            strokeWidth="6"
            strokeLinejoin="round"
            paintOrder="stroke"
            transform={`rotate(${r} ${x} ${y})`}
          >
            {text}
          </text>
        );
      })}
    </g>
  );
}

function CityMap() {
  return (
    <svg viewBox="39 31 5265 1506" preserveAspectRatio="none" className="block h-full w-full font-['Noto_Sans','Noto_Sans_CJK_KR',sans-serif]">
      <defs>
        {GRIDS.map(([id, w, h, angle]) => (
          <pattern key={id} id={id} width={w} height={h} patternUnits="userSpaceOnUse" patternTransform={`rotate(${angle})`}>
            <path d={`M0,3H${w}M3,0V${h}`} stroke="#cfcccb" strokeWidth="9" />
            <path d={`M0,3H${w}M3,0V${h}`} stroke="#ffffff" strokeWidth="6" />
          </pattern>
        ))}
        <pattern id="hatch" width="28" height="28" patternUnits="userSpaceOnUse" patternTransform="rotate(40)">
          <path d="M2,0V28" stroke="#f1cdc6" strokeWidth="4" />
        </pattern>
      </defs>
      <rect x="39" y="31" width="5265" height="1506" fill="#f2efe9" />
      {sheets.map((s) => <MapSheet key={s.x} s={s} />)}
      <g fill="none">
        <path d="M5160,31Q5120,150 5145,260Q5165,350 5190,430L5245,575" stroke="#e892a2" strokeWidth="20" />
        <path d="M5160,31Q5120,150 5145,260Q5165,350 5190,430L5245,575" stroke="#ffffff" strokeWidth="16" strokeDasharray="22 22" />
      </g>
      {sheets.map((s) => <MapText key={s.x} s={s} />)}
      <path d="M39,1067.500H5304" stroke="#ffffff" strokeWidth="3" />
      <path d="M430,31V1537M1693,31V1537M2962,31V1537M4226,31V1537" stroke="#ffffff" strokeWidth="2" opacity="0.35" />
      <g transform="translate(2737 551)">
        <path d="M2,2H54L74,22V72H2Z" fill="#c4d9f8" stroke="#9a9a9a" strokeWidth="3" />
        <path d="M54,2V22H74Z" fill="#ffffff" stroke="#9a9a9a" strokeWidth="3" />
        <path d="M10,30Q12,18 24,20Q32,8 40,22Q50,24 48,32H10Z" fill="#ffffff" />
        <path d="M6,70Q30,34 54,60L44,70Z" fill="#4cab2e" />
        <path d="M48,74L76,44V56L60,74Z" fill="#f4f2ee" />
      </g>
      <text x="2737" y="687" fontSize="57" fill="#ffffff" className="font-['Liberation_Sans',sans-serif]">Marker</text>
    </svg>
  );
}

function Metric({ label, value }: { label: string; value: string }) {
  return (
    <div>
      <div className="flex h-[40px] items-center pt-[2px] text-[24.700px] text-[#9c9d9f]">{label}</div>
      <div className="mt-[10px] flex h-[53px] items-center rounded-[13px] bg-[#2f3136] px-[20px] pt-[3px] text-[26.400px] font-bold text-white">{value}</div>
    </div>
  );
}

function ZoomControl() {
  return (
    <div className="absolute left-[16px] top-[17px] w-[56px] overflow-hidden rounded-[8px] border-[3px] border-black/20 bg-white bg-clip-padding text-black">
      <button className="flex h-[50px] w-full items-center justify-center border-b border-[#cccccc]">
        <svg viewBox="0 0 20 20" className="h-[20px] w-[20px]"><path d="M0 10.500H20M10 0.500V20" stroke="black" strokeWidth="3" /></svg>
      </button>
      <button className="flex h-[50px] w-full items-center justify-center">
        <svg viewBox="0 0 20 20" className="h-[20px] w-[20px]"><path d="M0 10.500H20" stroke="black" strokeWidth="3" /></svg>
      </button>
    </div>
  );
}

export default function App() {
  return (
    <div className="relative flex h-[1870px] w-[2782px] flex-col overflow-hidden bg-[#0a0d12] font-['Open_Sans','Noto_Sans_CJK_KR',sans-serif]">
      <header className="h-[192px] w-full bg-[#111214] bg-[radial-gradient(ellipse_760px_200px_at_480px_210px,rgba(45,30,90,0.2),transparent),radial-gradient(ellipse_800px_260px_at_1980px_200px,rgba(20,50,90,0.24),transparent)] px-[481px] pt-[34px]">
        <div className="grid h-[92px] w-[1821px] grid-cols-[1fr_auto_1fr] items-center rounded-[27px] border border-white/15 bg-white/[0.06] pl-[27px] pr-[26px] shadow-[0_16px_50px_rgba(0,0,0,0.4)]">
          <div className="flex items-center gap-[21px]">
            <span className="text-[29.200px] font-bold text-[#ececee]">Whik PoC UI</span>
            <span className="text-[24.700px] text-[#a0a0a3]">관광/헬스 PoC</span>
          </div>
          <nav className="ml-[204px] flex h-[68px] w-[272px] items-center rounded-[20px] border border-white/10 bg-white/[0.05] px-[6px] pb-px text-[24.700px] text-[#d4d4d6]">
            <a className="flex h-[53px] w-[63px] items-center justify-center rounded-[14px] bg-white font-medium text-black">홈</a>
            <a className="flex h-[53px] w-[86px] items-center justify-center">데모</a>
            <a className="flex h-[53px] w-[109px] items-center justify-center">도움말</a>
          </nav>
          <button className="mb-px flex h-[59px] w-[146px] items-center justify-center justify-self-end rounded-[20px] bg-white text-[24.700px] font-medium text-black">문의하기</button>
        </div>
      </header>

      <main className="flex min-h-0 flex-1 gap-[40px] pl-[36px] pr-[35px] pt-[40px]">
        <section className="w-[877px] shrink-0 rounded-t-[20px] bg-[#181b20] px-[26px] pt-[26px]">
          <h2 className="flex h-[48px] items-center text-[28.200px] font-bold tracking-[-0.2px] text-white">Sensors</h2>
          <div className="mt-[14px] flex flex-col gap-[9px]">
            <Metric label="심박" value="117 bpm" />
            <Metric label="스트레스" value="43%" />
          </div>
          <h2 className="mt-[41px] flex h-[48px] items-center pb-[2px] text-[28.200px] font-bold tracking-[-0.2px] text-white">Transcriber</h2>
          <button className="mt-[17px] flex h-[61px] w-[142px] items-center justify-center rounded-[20px] border border-white/15 text-[24.700px] text-white">음성 시작</button>
        </section>

        <div className="flex min-w-0 flex-1 flex-col gap-[40px]">
          <section className="h-[887px] shrink-0 rounded-[20px] bg-[#181b20] px-[20px] pt-[19px]">
            <div className="relative h-[528px] overflow-hidden rounded-[20px]">
              <CityMap />
              <ZoomControl />
              <div className="absolute bottom-0 right-0 flex h-[27px] items-center bg-white/80 px-[9px] font-['Liberation_Sans',sans-serif] text-[19.800px] text-[#333333]">
                <svg viewBox="0 0 12 8" preserveAspectRatio="none" className="mr-[6px] h-[13px] w-[19px]">
                  <path fill="#4C7BE1" d="M0 0h12v4H0z" />
                  <path fill="#FFD500" d="M0 4h12v3H0z" />
                  <path fill="#E0BC00" d="M0 7h12v1H0z" />
                </svg>
                <span className="whitespace-pre"><span className="text-[#0078A8]">Leaflet</span> | © OpenStreetMap contributors</span>
              </div>
            </div>
          </section>
          <section className="flex min-h-0 flex-1 rounded-t-[20px] bg-[#181b20] px-[20px] pt-[20px]">
            <div className="flex-1 rounded-t-[13px] bg-[#0b0c0f]" />
          </section>
        </div>
      </main>

      <div className="pointer-events-none absolute inset-0 bg-[linear-gradient(to_right,rgba(255,255,255,0.03)_2px,transparent_2px),linear-gradient(to_bottom,rgba(255,255,255,0.03)_2px,transparent_2px)] bg-[size:66px_66px] bg-[position:-4px_-6px] [mask-image:radial-gradient(ellipse_1030px_760px_at_40%_32%,black,transparent)]" />
    </div>
  );
}
